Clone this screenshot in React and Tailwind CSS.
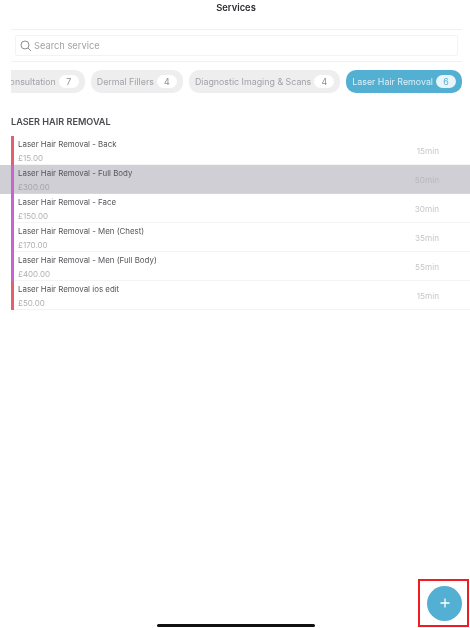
const services = [
  { name: 'Laser Hair Removal - Back', price: '£15.00', time: '15min', bar: 'bg-[#e5606f]' },
  { name: 'Laser Hair Removal - Full Body', price: '£300.00', time: '50min', bar: 'bg-[#c765cf]', selected: true },
  { name: 'Laser Hair Removal - Face', price: '£150.00', time: '30min', bar: 'bg-[#c765cf]' },
  { name: 'Laser Hair Removal - Men (Chest)', price: '£170.00', time: '35min', bar: 'bg-[#c765cf]' },
  { name: 'Laser Hair Removal - Men (Full Body)', price: '£400.00', time: '55min', bar: 'bg-[#c765cf]' },
  { name: 'Laser Hair Removal ios edit', price: '£50.00', time: '15min', bar: 'bg-[#e5606f]' },
];

const tabs = [
  { label: 'Consultation', count: 7 },
  { label: 'Dermal Fillers', count: 4 },
  { label: 'Diagnostic Imaging & Scans', count: 4 },
  { label: 'Laser Hair Removal', count: 6, active: true },
];

const App = () => {
  return (
    <div className="relative h-[628px] w-[470px] overflow-hidden bg-white font-['Inter',sans-serif] blur-[0.3px]">
      <h1 className="h-[29px] pt-[1px] pl-[2px] text-center text-[9.4px] leading-[14px] font-semibold text-[#2b2b30]">Services</h1>

      <div className="ml-[11px] w-[451px] border-y border-[#f1f1f2] py-[5px] pr-[4px] pl-[4px]">
        <div className="flex h-[21px] items-center rounded-[2px] border border-[#f3f3f4] pl-[4px]">
          <svg width="12" height="12" viewBox="0 0 12 12" fill="none" stroke="#8e8e93" strokeWidth="1">
            <circle cx="5" cy="5" r="4" />
            <path d="M8 8l3 3" />
          </svg>
          <span className="ml-[2px] text-[9.3px] text-[#a3a3a8]">Search service</span>
        </div>
      </div>

      <div className="mt-[8px] ml-[11px] flex w-[451px] justify-end gap-[6px] overflow-hidden">
        {tabs.map((tab) => (
          <div
            key={tab.label}
            className={`flex h-[23px] shrink-0 items-center gap-[3px] rounded-[10px] pr-[6px] pl-[6px] text-[8.85px] ${
              tab.active ? 'bg-[#53b0d3] text-[#dcf0f7]' : 'bg-[#eeeeef] text-[#a2a2a7]'
            }`}
          >
            <span className="whitespace-nowrap">{tab.label}</span>
            <span
              className={`flex h-[13px] w-[20px] items-center justify-center rounded-full ${
                tab.active ? 'bg-[#e8f5fa] text-[#53b0d3]' : 'bg-white text-[#8e8e93]'
              }`}
            >
              {tab.count}
            </span>
          </div>
        ))}
      </div>

      <h2 className="mt-[22px] ml-[11px] text-[9.1px] leading-[14px] font-semibold text-[#4a4a50]">LASER HAIR REMOVAL</h2>

      <div className="mt-[7px]">
        {services.map((s) => (
          <div
            key={s.name}
            className={`flex h-[29px] items-stretch pl-[11px] ${s.selected ? 'bg-[#d0cfd5]' : 'bg-white'}`}
          >
            <div className={`w-[3px] shrink-0 ${s.bar}`} />
            <div className={`flex flex-1 items-center justify-between border-b pt-[2px] pl-[4px] ${s.selected ? 'border-[#d8d8dc]' : 'border-[#f4f4f5]'}`}>
              <div className="flex flex-col gap-[1px]">
                <span className="text-[7.9px] leading-[13px] text-[#55555a]">{s.name}</span>
                <span className={`text-[8px] leading-[13px] ${s.selected ? 'text-[#a5a5aa]' : 'text-[#b0b0b4]'}`}>{s.price}</span>
              </div>
              <span className={`mr-[31px] text-[8.2px] ${s.selected ? 'text-[#b8b8bc]' : 'text-[#c6c6c9]'}`}>{s.time}</span>
            </div>
          </div>
        ))}
      </div>

      <div className="absolute top-[579px] left-[418px] flex h-[48px] w-[51px] items-center justify-center border-2 border-[#f01c22] pl-[2px]">
        <div className="flex h-[35px] w-[35px] items-center justify-center rounded-full bg-[#53b0d3]">
          <svg width="10" height="10" viewBox="0 0 10 10" stroke="#ffffff" strokeWidth="1.3">
            <path d="M5 0.5v9M0.5 5h9" />
          </svg>
        </div>
      </div>

      <div className="absolute top-[624px] left-[157px] h-[3px] w-[158px] rounded-full bg-[#111111]" />
    </div>
  );
};

export default App;
